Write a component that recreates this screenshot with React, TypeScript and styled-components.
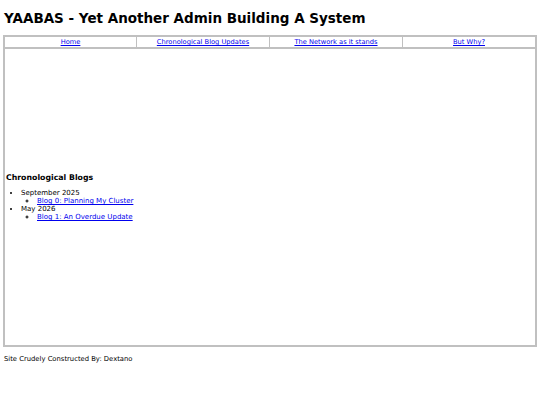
import React from 'react'
import styled, { createGlobalStyle } from 'styled-components';

const GlobalStyle = createGlobalStyle`
  body {
    margin: 0;
    background: #fff;
    font-family: "DejaVu Sans", Verdana, sans-serif;
    color: #000;
  }
`;

const Page = styled.div`
  padding: 0 3px;
`;

const Title = styled.h1`
  margin: 0;
  padding: 10px 1px 9px;
  font-size: 13.5px;
  font-weight: bold;
  line-height: 16px;
`;

const Frame = styled.div`
  border: 1px solid #c0c0c0;
  display: flex;
  flex-direction: column;
`;

const Nav = styled.div`
  display: grid;
  grid-template-columns: repeat(4, 1fr);
`;

const NavCell = styled.div`
  border: 1px solid #c0c0c0;
  text-align: center;
  font-size: 6.7px;
  line-height: 10px;
  & + & {
    border-left: none;
  }
`;

const Link = styled.a`
  color: #0000ee;
  text-decoration: underline;
`;

const Content = styled.div`
  border: 1px solid #c0c0c0;
  height: 296px;
  display: flex;
  flex-direction: column;
  justify-content: center;
`;

const Heading = styled.h2`
  margin: 0 0 7px;
  padding-left: 1px;
  font-size: 7.8px;
  font-weight: bold;
`;

const Months = styled.ul`
  margin: 0;
  padding-left: 16px;
  font-size: 7px;
  line-height: 8px;
  list-style: disc;
`;

const Posts = styled.ul`
  margin: 0;
  padding-left: 16px;
  list-style: circle;
`;

const Footer = styled.div`
  padding: 8px 1px;
  font-size: 6.8px;
`;

const blogs = [
  { month: 'September 2025', posts: ['Blog 0: Planning My Cluster'] },
  { month: 'May 2026', posts: ['Blog 1: An Overdue Update'] },
];

function App() {
  return (
    <Page>
      <GlobalStyle />
      <Title>YAABAS - Yet Another Admin Building A System</Title>
      <Frame>
        <Nav>
          <NavCell><Link href="#">Home</Link></NavCell>
          <NavCell><Link href="#">Chronological Blog Updates</Link></NavCell>
          <NavCell><Link href="#">The Network as it stands</Link></NavCell>
          <NavCell><Link href="#">But Why?</Link></NavCell>
        </Nav>
        <Content>
          <Heading>Chronological Blogs</Heading>
          <Months>
            {blogs.map((b) => (
              <li key={b.month}>
                {b.month}
                <Posts>
                  {b.posts.map((p) => (
                    <li key={p}><Link href="#">{p}</Link></li>
                  ))}
                </Posts>
              </li>
            ))}
          </Months>
        </Content>
      </Frame>
      <Footer>Site Crudely Constructed By: Dextano</Footer>
    </Page>
  )
}

export default App
